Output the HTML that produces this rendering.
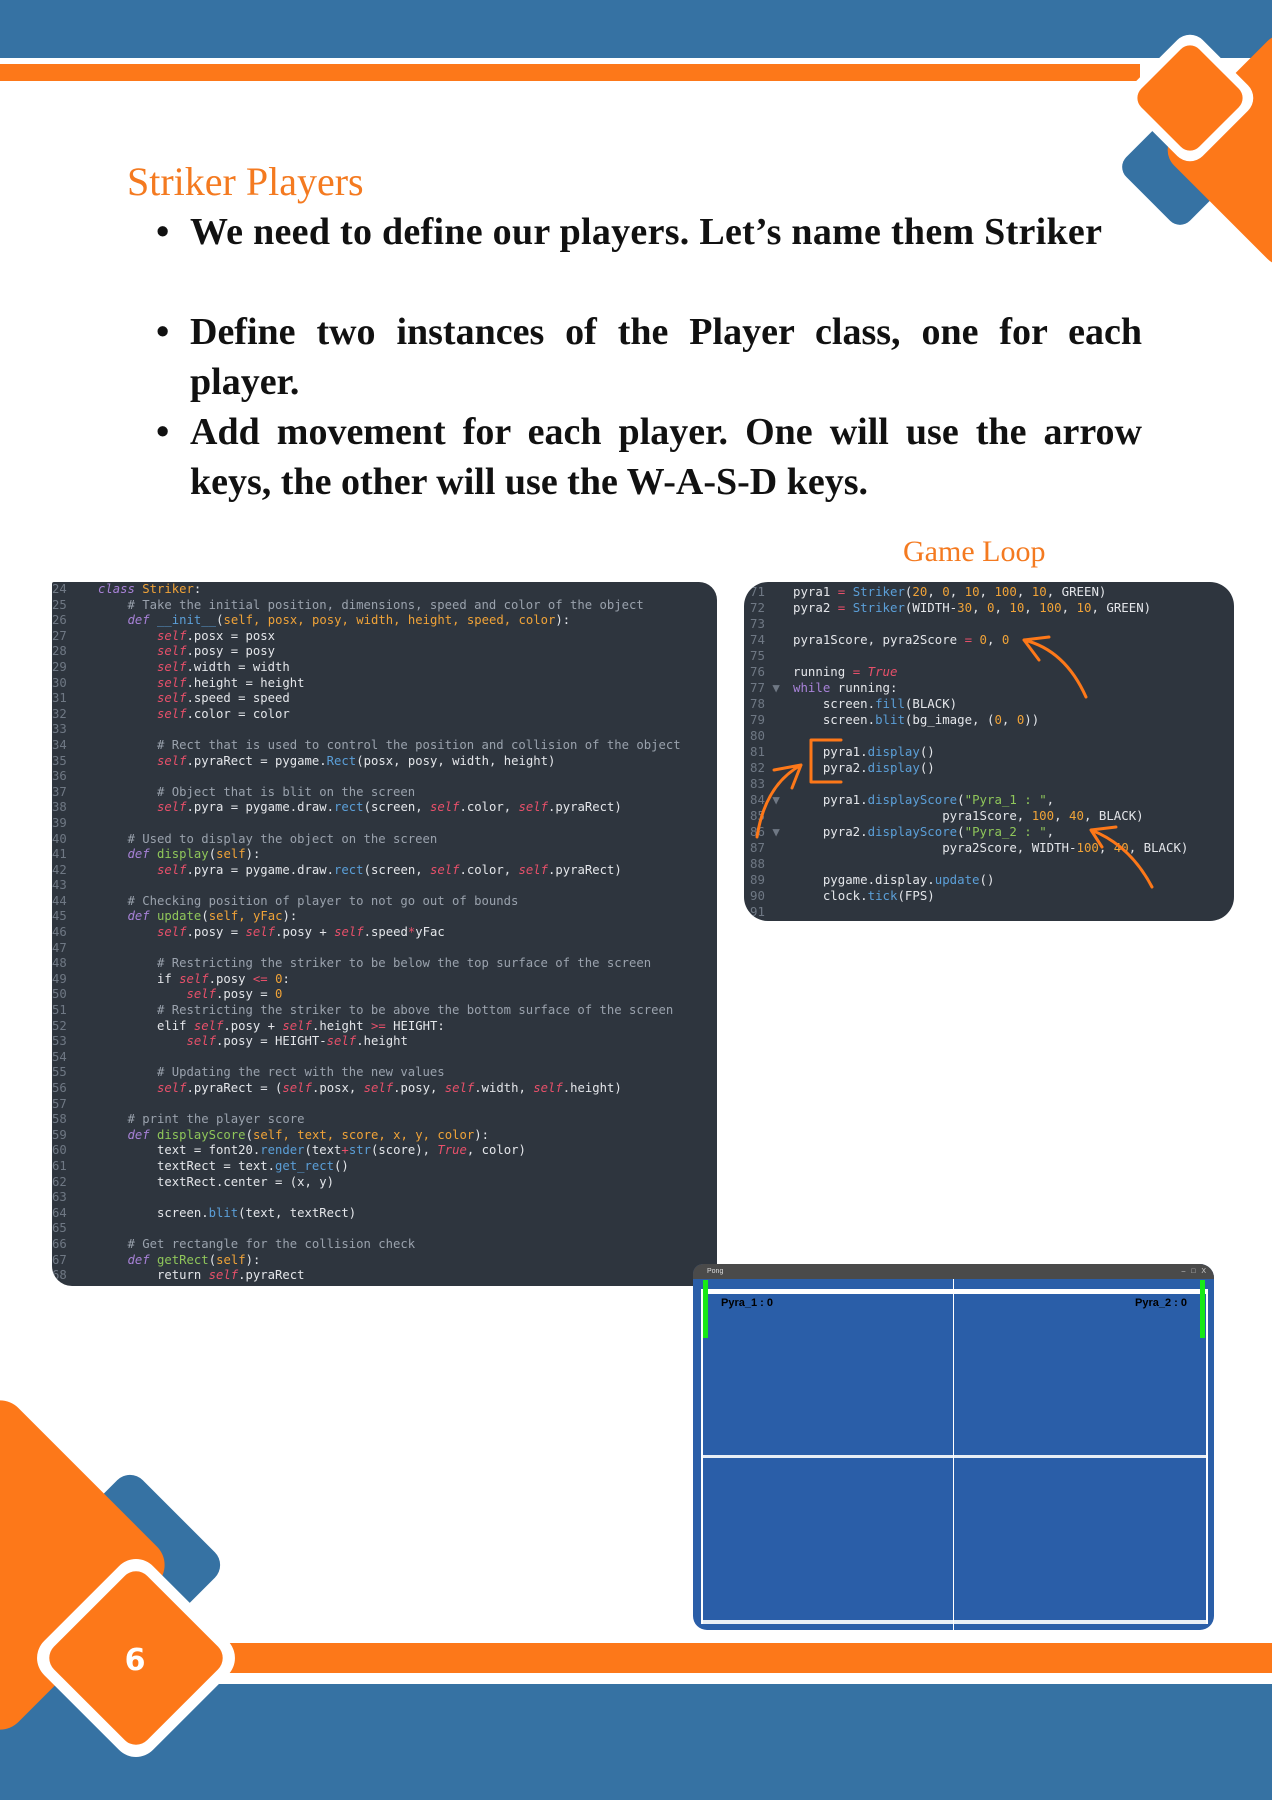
<!DOCTYPE html>
<html><head><meta charset="utf-8"><style>
*{margin:0;padding:0;box-sizing:border-box}
body{width:1272px;height:1800px;position:relative;overflow:hidden;background:#fff;font-family:"Liberation Serif",serif}
.abs{position:absolute}
.t{font-family:"Liberation Serif",serif;color:#111;font-size:38px;font-weight:bold;white-space:nowrap}
.code{font-family:"DejaVu Sans Mono","Liberation Mono",monospace;color:#e4e6ea;white-space:normal;background:#2e353e;overflow:hidden}
.code .l{display:block;height:15.6px;line-height:15.6px;white-space:pre}
.code2 .l{height:16px;line-height:16px}
.n{color:#6f7884;display:inline-block}
.k{color:#a882d8;font-style:italic}
.s{color:#e8506a;font-style:italic}
.o{color:#f0a338}
.c{color:#9aa2ad}
.b{color:#5b9fd8}
.g{color:#8fc65a}
.r{color:#e8506a}
</style></head><body>
<svg class="abs" style="left:0;top:0" width="1272" height="1800">
<rect x="0" y="0" width="1272" height="58" fill="#3672a3"/>
<rect x="0" y="64" width="1140" height="17" fill="#fd7819"/>
<rect x="0" y="1643" width="1272" height="30" fill="#fd7819"/>
<rect x="0" y="1684" width="1272" height="116" fill="#3672a3"/>
<rect x="1135" y="122" width="90" height="90" rx="14" fill="#3672a3" transform="rotate(45 1180 167)"/>
<rect x="1195" y="62" width="176" height="176" rx="22" fill="#fd7819" transform="rotate(45 1283 150)"/>
<rect x="1140" y="48" width="100" height="100" rx="18" fill="#fff" transform="rotate(45 1190 98)"/>
<rect x="1149" y="57" width="82" height="82" rx="13" fill="#fd7819" transform="rotate(45 1190 98)"/>
<rect x="61" y="1496" width="138" height="138" rx="18" fill="#3672a3" transform="rotate(45 130 1565)"/>
<rect x="-124" y="1441" width="248" height="248" rx="26" fill="#fd7819" transform="rotate(45 0 1565)"/>
<rect x="59" y="1581" width="154" height="154" rx="24" fill="#fff" transform="rotate(45 136 1658)"/>
<rect x="70" y="1592" width="132" height="132" rx="16" fill="#fd7819" transform="rotate(45 136 1658)"/>
<text x="135" y="1670" fill="#fff" font-family="DejaVu Sans,sans-serif" font-weight="bold" font-size="30" text-anchor="middle">6</text>
</svg>

<div class="abs" style="left:127px;top:158px;font-size:40px;color:#f47a20">Striker Players</div>
<div class="abs t" style="left:156px;top:210px">•</div>
<div class="abs t" style="left:190px;top:210px;letter-spacing:0.28px">We need to define our players. Let’s name them Striker</div>
<div class="abs t" style="left:156px;top:310px">•</div>
<div class="abs t" style="left:190px;top:310px;width:952px;text-align:justify;text-align-last:justify">Define two instances of the Player class, one for each</div>
<div class="abs t" style="left:190px;top:360px">player.</div>
<div class="abs t" style="left:156px;top:410px">•</div>
<div class="abs t" style="left:190px;top:410px;width:952px;text-align:justify;text-align-last:justify">Add movement for each player. One will use the arrow</div>
<div class="abs t" style="left:190px;top:460px">keys, the other will use the W-A-S-D keys.</div>
<div class="abs" style="left:903px;top:535px;font-size:30px;color:#f47a20">Game Loop</div>

<div class="abs code" style="left:52px;top:582px;width:665px;height:704px;border-radius:2px 18px 20px 20px;font-size:12.25px"><span class="l"><span class="n" style="width:46px">24</span><span class="k">class</span> <span class="o">Striker</span>:</span><span class="l"><span class="n" style="width:46px">25</span>    <span class="c"># Take the initial position, dimensions, speed and color of the object</span></span><span class="l"><span class="n" style="width:46px">26</span>    <span class="k">def</span> <span class="b">__init__</span>(<span class="o">self, posx, posy, width, height, speed, color</span>):</span><span class="l"><span class="n" style="width:46px">27</span>        <span class="s">self</span>.posx = posx</span><span class="l"><span class="n" style="width:46px">28</span>        <span class="s">self</span>.posy = posy</span><span class="l"><span class="n" style="width:46px">29</span>        <span class="s">self</span>.width = width</span><span class="l"><span class="n" style="width:46px">30</span>        <span class="s">self</span>.height = height</span><span class="l"><span class="n" style="width:46px">31</span>        <span class="s">self</span>.speed = speed</span><span class="l"><span class="n" style="width:46px">32</span>        <span class="s">self</span>.color = color</span><span class="l"><span class="n" style="width:46px">33</span></span><span class="l"><span class="n" style="width:46px">34</span>        <span class="c"># Rect that is used to control the position and collision of the object</span></span><span class="l"><span class="n" style="width:46px">35</span>        <span class="s">self</span>.pyraRect = pygame.<span class="b">Rect</span>(posx, posy, width, height)</span><span class="l"><span class="n" style="width:46px">36</span></span><span class="l"><span class="n" style="width:46px">37</span>        <span class="c"># Object that is blit on the screen</span></span><span class="l"><span class="n" style="width:46px">38</span>        <span class="s">self</span>.pyra = pygame.draw.<span class="b">rect</span>(screen, <span class="s">self</span>.color, <span class="s">self</span>.pyraRect)</span><span class="l"><span class="n" style="width:46px">39</span></span><span class="l"><span class="n" style="width:46px">40</span>    <span class="c"># Used to display the object on the screen</span></span><span class="l"><span class="n" style="width:46px">41</span>    <span class="k">def</span> <span class="g">display</span>(<span class="o">self</span>):</span><span class="l"><span class="n" style="width:46px">42</span>        <span class="s">self</span>.pyra = pygame.draw.<span class="b">rect</span>(screen, <span class="s">self</span>.color, <span class="s">self</span>.pyraRect)</span><span class="l"><span class="n" style="width:46px">43</span></span><span class="l"><span class="n" style="width:46px">44</span>    <span class="c"># Checking position of player to not go out of bounds</span></span><span class="l"><span class="n" style="width:46px">45</span>    <span class="k">def</span> <span class="g">update</span>(<span class="o">self, yFac</span>):</span><span class="l"><span class="n" style="width:46px">46</span>        <span class="s">self</span>.posy = <span class="s">self</span>.posy + <span class="s">self</span>.speed<span class="r">*</span>yFac</span><span class="l"><span class="n" style="width:46px">47</span></span><span class="l"><span class="n" style="width:46px">48</span>        <span class="c"># Restricting the striker to be below the top surface of the screen</span></span><span class="l"><span class="n" style="width:46px">49</span>        if <span class="s">self</span>.posy <span class="r">&lt;=</span> <span class="o">0</span>:</span><span class="l"><span class="n" style="width:46px">50</span>            <span class="s">self</span>.posy = <span class="o">0</span></span><span class="l"><span class="n" style="width:46px">51</span>        <span class="c"># Restricting the striker to be above the bottom surface of the screen</span></span><span class="l"><span class="n" style="width:46px">52</span>        elif <span class="s">self</span>.posy + <span class="s">self</span>.height <span class="r">&gt;=</span> HEIGHT:</span><span class="l"><span class="n" style="width:46px">53</span>            <span class="s">self</span>.posy = HEIGHT-<span class="s">self</span>.height</span><span class="l"><span class="n" style="width:46px">54</span></span><span class="l"><span class="n" style="width:46px">55</span>        <span class="c"># Updating the rect with the new values</span></span><span class="l"><span class="n" style="width:46px">56</span>        <span class="s">self</span>.pyraRect = (<span class="s">self</span>.posx, <span class="s">self</span>.posy, <span class="s">self</span>.width, <span class="s">self</span>.height)</span><span class="l"><span class="n" style="width:46px">57</span></span><span class="l"><span class="n" style="width:46px">58</span>    <span class="c"># print the player score</span></span><span class="l"><span class="n" style="width:46px">59</span>    <span class="k">def</span> <span class="g">displayScore</span>(<span class="o">self, text, score, x, y, color</span>):</span><span class="l"><span class="n" style="width:46px">60</span>        text = font20.<span class="b">render</span>(text<span class="r">+</span><span class="b">str</span>(score), <span class="s">True</span>, color)</span><span class="l"><span class="n" style="width:46px">61</span>        textRect = text.<span class="b">get_rect</span>()</span><span class="l"><span class="n" style="width:46px">62</span>        textRect.center = (x, y)</span><span class="l"><span class="n" style="width:46px">63</span></span><span class="l"><span class="n" style="width:46px">64</span>        screen.<span class="b">blit</span>(text, textRect)</span><span class="l"><span class="n" style="width:46px">65</span></span><span class="l"><span class="n" style="width:46px">66</span>    <span class="c"># Get rectangle for the collision check</span></span><span class="l"><span class="n" style="width:46px">67</span>    <span class="k">def</span> <span class="g">getRect</span>(<span class="o">self</span>):</span><span class="l"><span class="n" style="width:46px">68</span>        return <span class="s">self</span>.pyraRect</span></div>

<div class="abs code code2" style="left:744px;top:582px;width:490px;height:339px;border-radius:24px;font-size:12.4px;padding-top:2px"><span class="l"><span class="n" style="width:49px;padding-left:6px">71</span>pyra1 <span class="r">=</span> <span class="b">Striker</span>(<span class="o">20</span>, <span class="o">0</span>, <span class="o">10</span>, <span class="o">100</span>, <span class="o">10</span>, GREEN)</span><span class="l"><span class="n" style="width:49px;padding-left:6px">72</span>pyra2 <span class="r">=</span> <span class="b">Striker</span>(WIDTH-<span class="o">30</span>, <span class="o">0</span>, <span class="o">10</span>, <span class="o">100</span>, <span class="o">10</span>, GREEN)</span><span class="l"><span class="n" style="width:49px;padding-left:6px">73</span></span><span class="l"><span class="n" style="width:49px;padding-left:6px">74</span>pyra1Score, pyra2Score <span class="r">=</span> <span class="o">0</span>, <span class="o">0</span></span><span class="l"><span class="n" style="width:49px;padding-left:6px">75</span></span><span class="l"><span class="n" style="width:49px;padding-left:6px">76</span>running <span class="r">=</span> <span class="s">True</span></span><span class="l"><span class="n" style="width:49px;padding-left:6px">77 ▼</span><span class="k" style="font-style:normal">while</span> running:</span><span class="l"><span class="n" style="width:49px;padding-left:6px">78</span>    screen.<span class="b">fill</span>(BLACK)</span><span class="l"><span class="n" style="width:49px;padding-left:6px">79</span>    screen.<span class="b">blit</span>(bg_image, (<span class="o">0</span>, <span class="o">0</span>))</span><span class="l"><span class="n" style="width:49px;padding-left:6px">80</span></span><span class="l"><span class="n" style="width:49px;padding-left:6px">81</span>    pyra1.<span class="b">display</span>()</span><span class="l"><span class="n" style="width:49px;padding-left:6px">82</span>    pyra2.<span class="b">display</span>()</span><span class="l"><span class="n" style="width:49px;padding-left:6px">83</span></span><span class="l"><span class="n" style="width:49px;padding-left:6px">84 ▼</span>    pyra1.<span class="b">displayScore</span>(<span class="g">"Pyra_1 : "</span>,</span><span class="l"><span class="n" style="width:49px;padding-left:6px">85</span>                    pyra1Score, <span class="o">100</span>, <span class="o">40</span>, BLACK)</span><span class="l"><span class="n" style="width:49px;padding-left:6px">86 ▼</span>    pyra2.<span class="b">displayScore</span>(<span class="g">"Pyra_2 : "</span>,</span><span class="l"><span class="n" style="width:49px;padding-left:6px">87</span>                    pyra2Score, WIDTH-<span class="o">100</span>, <span class="o">40</span>, BLACK)</span><span class="l"><span class="n" style="width:49px;padding-left:6px">88</span></span><span class="l"><span class="n" style="width:49px;padding-left:6px">89</span>    pygame.display.<span class="b">update</span>()</span><span class="l"><span class="n" style="width:49px;padding-left:6px">90</span>    clock.<span class="b">tick</span>(FPS)</span><span class="l"><span class="n" style="width:49px;padding-left:6px">91</span></span></div>
<svg class="abs" style="left:0;top:0" width="1272" height="1800" fill="none" stroke="#fd7819" stroke-width="3" stroke-linecap="round" stroke-linejoin="round">
<path d="M1086 697 Q1065 650 1024 640 M1024 640 L1049 637 M1024 640 L1039 660"/>
<path d="M841 740 L811 740 L811 782 L841 782"/>
<path d="M757 837 Q765 785 801 765 M801 765 L774 770 M801 765 L792 788"/>
<path d="M1152 887 Q1130 845 1091 830 M1091 830 L1116 827 M1091 830 L1102 847"/>
</svg>

<div class="abs" style="left:693px;top:1264px;width:521px;height:366px;background:#2a5ea8;border-radius:10px 14px 14px 14px;overflow:hidden">
<div class="abs" style="left:0;top:0;width:521px;height:15px;background:#4a4a4a;color:#ddd;font:7px 'Liberation Sans',sans-serif;line-height:15px;padding-left:14px">Pong<span style="position:absolute;right:8px;color:#ccc">–&nbsp;&nbsp;&nbsp;□&nbsp;&nbsp;&nbsp;X</span></div>
<div class="abs" style="left:8px;top:25px;width:507px;height:5px;background:#fff"></div>
<div class="abs" style="left:8px;top:191px;width:507px;height:3px;background:#e8eef5"></div>
<div class="abs" style="left:8px;top:356px;width:507px;height:4px;background:#e8eef5"></div>
<div class="abs" style="left:8px;top:25px;width:2px;height:335px;background:#fff"></div>
<div class="abs" style="left:513px;top:25px;width:2px;height:335px;background:#fff"></div>
<div class="abs" style="left:260px;top:15px;width:1px;height:351px;background:#fff"></div>
<div class="abs" style="left:10px;top:16px;width:5px;height:58px;background:#17e817"></div>
<div class="abs" style="left:507px;top:16px;width:5px;height:58px;background:#17e817"></div>
<div class="abs" style="left:28px;top:33px;font:bold 11px 'Liberation Sans',sans-serif;color:#000">Pyra_1 : 0</div>
<div class="abs" style="left:442px;top:33px;font:bold 11px 'Liberation Sans',sans-serif;color:#000">Pyra_2 : 0</div>
</div>
</body></html>
